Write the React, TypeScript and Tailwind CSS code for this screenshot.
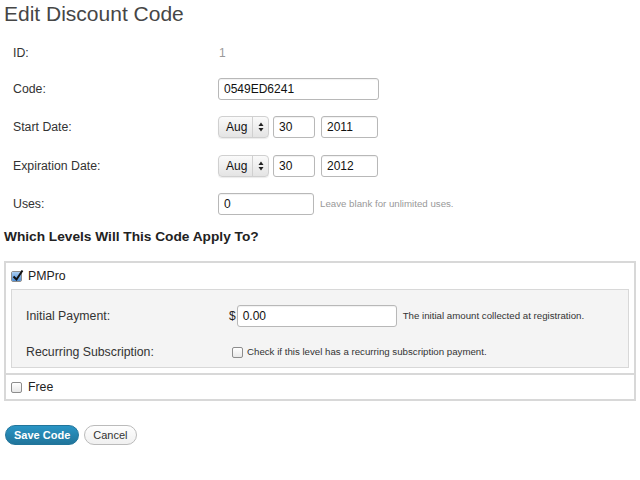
import React from "react"

const font = { fontFamily: '"Liberation Sans", Arial, sans-serif' }

function TextBox({ value, w }: { value: string; w: string }) {
  return (
    <div
      className={`${w} h-[22px] border border-[#b8b8b8] rounded-[3px] bg-white px-[5px] flex items-center text-[12px] text-[#111] shadow-[inset_0_1px_1px_rgba(0,0,0,0.06)]`}
    >
      {value}
    </div>
  )
}

function MonthSelect() {
  return (
    <div className="w-[51px] h-[22px] rounded-[4px] border border-[#d0d0d0] bg-gradient-to-b from-[#fafafa] to-[#e4e4e4] flex items-center text-[12px] text-[#111] shadow-[0_1px_1px_rgba(0,0,0,0.08)]">
      <span className="pl-[7px] w-[33px]">Aug</span>
      <div className="h-full border-l border-[#d0d0d0] flex-1 flex items-center justify-center">
        <svg width="6" height="10" viewBox="0 0 6 10">
          <path d="M3 0.5 L5.5 4 L0.5 4 Z" fill="#222" />
          <path d="M3 9.5 L5.5 6 L0.5 6 Z" fill="#222" />
        </svg>
      </div>
    </div>
  )
}

function Checkbox({ checked }: { checked?: boolean }) {
  return (
    <div className="relative w-[11px] h-[11px] rounded-[2px] border border-[#8d8d8d] bg-gradient-to-b from-[#fff] to-[#e8e8e8]">
      {checked && (
        <>
          <div className="absolute inset-0 rounded-[1px] bg-gradient-to-b from-[#a9cdf2] to-[#4f8fd6]" />
          <svg className="absolute left-[0px] -top-[3px]" width="12" height="13" viewBox="0 0 12 13">
            <path d="M1.5 7.5 L4.5 10.5 L10.5 1.5" stroke="#111" strokeWidth="2" fill="none" />
          </svg>
        </>
      )}
    </div>
  )
}

function Row({ label, children }: { label: string; children: React.ReactNode }) {
  return (
    <div className="flex items-center h-[24px]">
      <div className="w-[218px] pl-[13px] text-[12.3px] text-[#333]">{label}</div>
      <div className="flex items-center">{children}</div>
    </div>
  )
}

function DateFields({ year }: { year: string }) {
  return (
    <div className="flex items-center gap-[4px]">
      <MonthSelect />
      <TextBox value="30" w="w-[42px]" />
      <div className="ml-[2px]">
        <TextBox value={year} w="w-[57px]" />
      </div>
    </div>
  )
}

export default function App() {
  return (
    <div style={font} className="w-[640px] h-[480px] bg-white text-[#333] overflow-hidden">
      <h1 className="pl-[4px] pt-[1px] text-[21px] leading-[26px] text-[#464646]">Edit Discount Code</h1>

      <div className="pt-[14px]">
        <Row label="ID:">
          <span className="pl-[1px] text-[12px] text-[#999]">1</span>
        </Row>
        <div className="h-[12px]" />
        <Row label="Code:">
          <TextBox value="0549ED6241" w="w-[161px]" />
        </Row>
        <div className="h-[14px]" />
        <Row label="Start Date:">
          <DateFields year="2011" />
        </Row>
        <div className="h-[15px]" />
        <Row label="Expiration Date:">
          <DateFields year="2012" />
        </Row>
        <div className="h-[14px]" />
        <Row label="Uses:">
          <TextBox value="0" w="w-[96px]" />
          <span className="ml-[6px] text-[9.7px] text-[#999]">Leave blank for unlimited uses.</span>
        </Row>
      </div>

      <h3 className="pl-[4px] mt-[12px] text-[13.7px] font-bold text-[#222] leading-[18px]">
        Which Levels Will This Code Apply To?
      </h3>

      <div className="mx-[4px] mt-[15px] w-[632px] border-2 border-[#d8d8d8] bg-white">
        <div className="flex items-center gap-[6px] pl-[5px] h-[26px] text-[12.3px] text-[#222]">
          <Checkbox checked />
          <span>PMPro</span>
        </div>
        <div className="mx-[5px] mb-[5px] border border-[#d8d8d8] bg-[#f4f4f4] pt-[14px] pb-[3px]">
          <div className="flex items-center h-[24px]">
            <div className="w-[217px] pl-[14px] text-[12.3px] text-[#333]">Initial Payment:</div>
            <span className="text-[12px] text-[#222] mr-[1px]">$</span>
            <TextBox value="0.00" w="w-[160px]" />
            <span className="ml-[6px] text-[9.7px] text-[#333]">The initial amount collected at registration.</span>
          </div>
          <div className="h-[12px]" />
          <div className="flex items-center h-[24px]">
            <div className="w-[220px] pl-[14px] text-[12.3px] text-[#333]">Recurring Subscription:</div>
            <Checkbox />
            <span className="ml-[4px] text-[9.7px] text-[#333]">Check if this level has a recurring subscription payment.</span>
          </div>
        </div>
        <div className="border-t-2 border-[#d8d8d8] flex items-center gap-[6px] pl-[5px] h-[26px] text-[12.3px] text-[#222]">
          <Checkbox />
          <span>Free</span>
        </div>
      </div>

      <div className="flex items-center gap-[5px] pl-[5px] mt-[24px]">
        <button className="h-[20px] px-[8px] rounded-full bg-gradient-to-b from-[#2a95c5] to-[#21759b] border border-[#21759b] text-white text-[11px] font-bold">
          Save Code
        </button>
        <button className="h-[20px] px-[8px] rounded-full bg-gradient-to-b from-[#fefefe] to-[#f0f0f0] border border-[#bbb] text-[#333] text-[11px]">
          Cancel
        </button>
      </div>
    </div>
  )
}
